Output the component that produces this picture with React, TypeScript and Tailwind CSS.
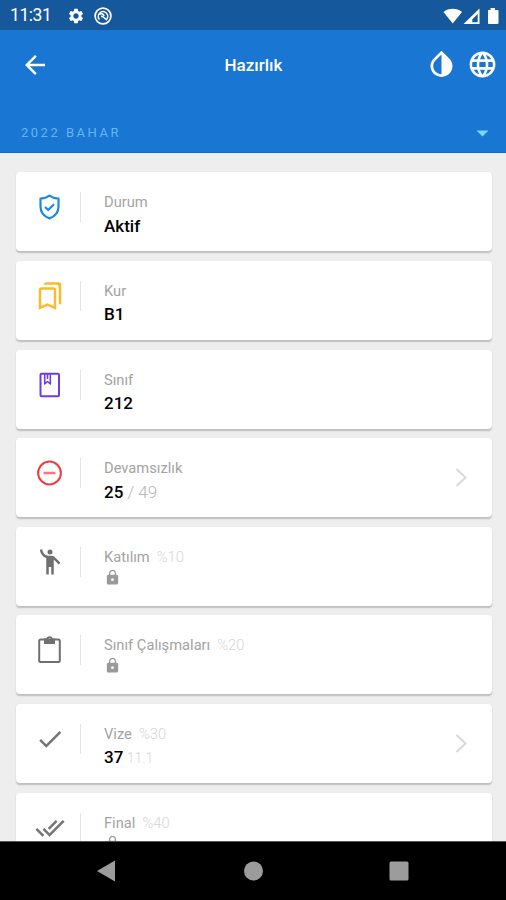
import type { ReactNode } from "react";
import type { IconType } from "react-icons";
import {
  MdArrowBack,
  MdDone,
  MdDoneAll,
  MdEmojiPeople,
  MdInvertColors,
  MdLanguage,
  MdLock,
  MdOutlineBookmarks,
  MdSettings,
} from "react-icons/md";

interface RowView {
  label: string;
  weight?: string;
  value?: string;
  suffix?: string;
  suffixClass?: string;
  link?: boolean;
  icon: ReactNode;
}

function RowIcon({ as: Icon, className }: { as: IconType; className: string }) {
  return <Icon size={30} className={className} />;
}

function LineIcon({ className, children }: { className: string; children: ReactNode }) {
  return (
    <svg className={className} width="30" height="30" viewBox="0 0 30 30" fill="none" stroke="currentColor" strokeWidth="2" strokeLinejoin="round">
      {children}
    </svg>
  );
}

const rows: RowView[] = [
  {
    label: "Durum",
    value: "Aktif",
    icon: (
      <LineIcon className="text-[#1e88e5]">
        <path d="M14.500 3.700C11.800 5.700 8.800 6.500 5.500 6.600V14.500C5.500 20 8.700 24.300 14.500 26.400C20.300 24.300 23.500 20 23.500 14.500V6.600C20.200 6.500 17.200 5.700 14.500 3.700Z" strokeWidth="2.200" />
        <path d="M10 15L13.200 18L19 12.300" strokeWidth="2.200" />
      </LineIcon>
    ),
  },
  { label: "Kur", value: "B1", icon: <RowIcon as={MdOutlineBookmarks} className="text-[#fbb92c]" /> },
  {
    label: "Sınıf",
    value: "212",
    icon: (
      <LineIcon className="text-[#6a3de8]">
        <rect x="5.500" y="3.800" width="18.500" height="22.500" rx="1" />
        <path d="M9.700 4V14L12.500 11.500L15.300 14V4M12.500 4V9" strokeWidth="1.600" />
      </LineIcon>
    ),
  },
  {
    label: "Devamsızlık",
    value: "25",
    suffix: " / 49",
    suffixClass: "text-[17px] text-[#b5b5b5]",
    link: true,
    icon: (
      <LineIcon className="text-[#f03a3e]">
        <circle cx="14.500" cy="15" r="11.400" />
        <path d="M8.500 15H20.500" stroke="#f47b7d" strokeWidth="2.500" />
      </LineIcon>
    ),
  },
  { label: "Katılım", weight: "%10", icon: <RowIcon as={MdEmojiPeople} className="text-[#707070]" /> },
  {
    label: "Sınıf Çalışmaları",
    weight: "%20",
    icon: (
      <LineIcon className="text-[#707070]">
        <rect x="4.200" y="4.500" width="20.600" height="22.500" rx="1.500" />
        <path d="M9 3.500V9H20V3.500H17.800A3.500 3.500 0 0 0 11.200 3.500ZM14.500 3A1.100 1.100 0 1 1 14.490 3Z" fill="currentColor" fillRule="evenodd" stroke="none" />
      </LineIcon>
    ),
  },
  {
    label: "Vize",
    weight: "%30",
    value: "37",
    suffix: " 11.1",
    suffixClass: "text-sm text-[#d8d8d8]",
    link: true,
    icon: <RowIcon as={MdDone} className="text-[#757575]" />,
  },
  { label: "Final", weight: "%40", icon: <RowIcon as={MdDoneAll} className="text-[#757575]" /> },
];

function StatusBar() {
  return (
    <div className="flex h-[30px] shrink-0 items-center bg-[#15589c] pt-px pr-[7px] pl-[10px] text-white">
      <span className="w-[57px] pt-px text-[17.500px] leading-none tracking-tight">11:31</span>
      <MdSettings size={18} />
      <svg className="ml-[9px]" width="18" height="18" viewBox="0 0 18 18" fill="none" stroke="currentColor">
        <circle cx="9" cy="9" r="7.900" strokeWidth="1.700" />
        <path d="M5.500 12.500A4.700 4.700 0 1 1 12.500 12.500M5 7.500C7 5.800 9.500 6.600 10 9.200M7 9.500C9 8.800 10 11 13 13" strokeWidth="1.600" />
      </svg>
      <svg className="ml-auto" width="56" height="18" viewBox="0 0 56 18" fill="currentColor">
        <path d="M0.500 5C5.500 0.800 14 0.800 19 5L9.750 16.500Z" />
        <path fillRule="evenodd" d="M36.500 1.500V17H20.500ZM34.700 7V15.200H29.300V12.200Z" />
        <path d="M45 3H47.500V1H52V3H54.500Q55.500 3 55.500 4V16Q55.500 17 54.500 17H46Q45 17 45 16Z" />
      </svg>
    </div>
  );
}

function Header() {
  return (
    <header className="h-[123px] shrink-0 border-b border-[#0e6bc8] bg-[#1976d2] text-white">
      <div className="grid h-[69px] grid-cols-3 items-center pr-[8px] pl-5">
        <MdArrowBack size={30} />
        <h1 className="pt-px pr-[11px] text-center text-[17px] leading-none font-medium whitespace-nowrap">Hazırlık</h1>
        <div className="flex items-center justify-end gap-[9px]">
          <MdInvertColors size={33} />
          <MdLanguage size={31} />
        </div>
      </div>
      <div className="flex h-[52px] items-center justify-between pt-3 pr-[17px] pl-[21px]">
        <span className="pt-0.5 text-[13px] leading-none tracking-[2.500px] text-[#64b5f6]">2022 BAHAR</span>
        <svg className="mt-1" width="13" height="7" viewBox="0 0 13 7" fill="#81d4fa">
          <path d="M0.500 0.500H12.500L6.500 6.500Z" />
        </svg>
      </div>
    </header>
  );
}

function Row({ row }: { row: RowView }) {
  return (
    <li className="flex h-[79px] shrink-0 rounded-[4px] bg-white pl-[19px] shadow-[0_1.5px_1.5px_rgba(0,0,0,0.2)]">
      <div className="w-[30px] pt-[20px]">{row.icon}</div>
      <div className="mt-5 ml-[15px] h-[30px] w-px bg-[#e4e4e4]" />
      <div className="pt-5 pl-[23px]">
        <div className="flex gap-[7px] text-[14.700px] leading-5 text-[#a3a3a3]">
          <span>{row.label}</span>
          {row.weight && <span className="font-light text-[#d6d6d6]">{row.weight}</span>}
        </div>
        {row.value ? (
          <p className="mt-[3.500px] h-5 text-[17px] leading-5 font-medium whitespace-pre text-black">
            {row.value}
            {row.suffix && <span className={"leading-none font-light " + row.suffixClass}>{row.suffix}</span>}
          </p>
        ) : (
          <MdLock size={17} className="mt-[2px] text-[#999999]" />
        )}
      </div>
      {row.link && (
        <svg className="mt-[29px] mr-[24px] ml-auto" width="13" height="21" viewBox="0 0 13 21" fill="none" stroke="#d9d9d9" strokeWidth="2">
          <path d="M1.500 2L10.500 10.500L1.500 19" />
        </svg>
      )}
    </li>
  );
}

function NavBar() {
  return (
    <nav className="h-[59px] shrink-0 border-t border-[#555555] bg-black text-[#9c9c9c]">
      <svg width="506" height="58" viewBox="0 0 506 58" fill="currentColor">
        <path d="M97 29L115 18.500V39.500Z" />
        <circle cx="253.500" cy="29" r="9.500" />
        <rect x="389.500" y="19.500" width="19" height="19" rx="1.500" />
      </svg>
    </nav>
  );
}

export default function App() {
  return (
    <div className="flex h-[900px] w-[506px] flex-col overflow-hidden bg-[#eeeeee] font-[Roboto,sans-serif]">
      <StatusBar />
      <Header />
      <ul className="flex min-h-0 flex-1 flex-col gap-[9.600px] overflow-hidden pt-[19.400px] pr-[14px] pl-4">
        {rows.map((row) => (
          <Row key={row.label} row={row} />
        ))}
      </ul>
      <NavBar />
    </div>
  );
}
